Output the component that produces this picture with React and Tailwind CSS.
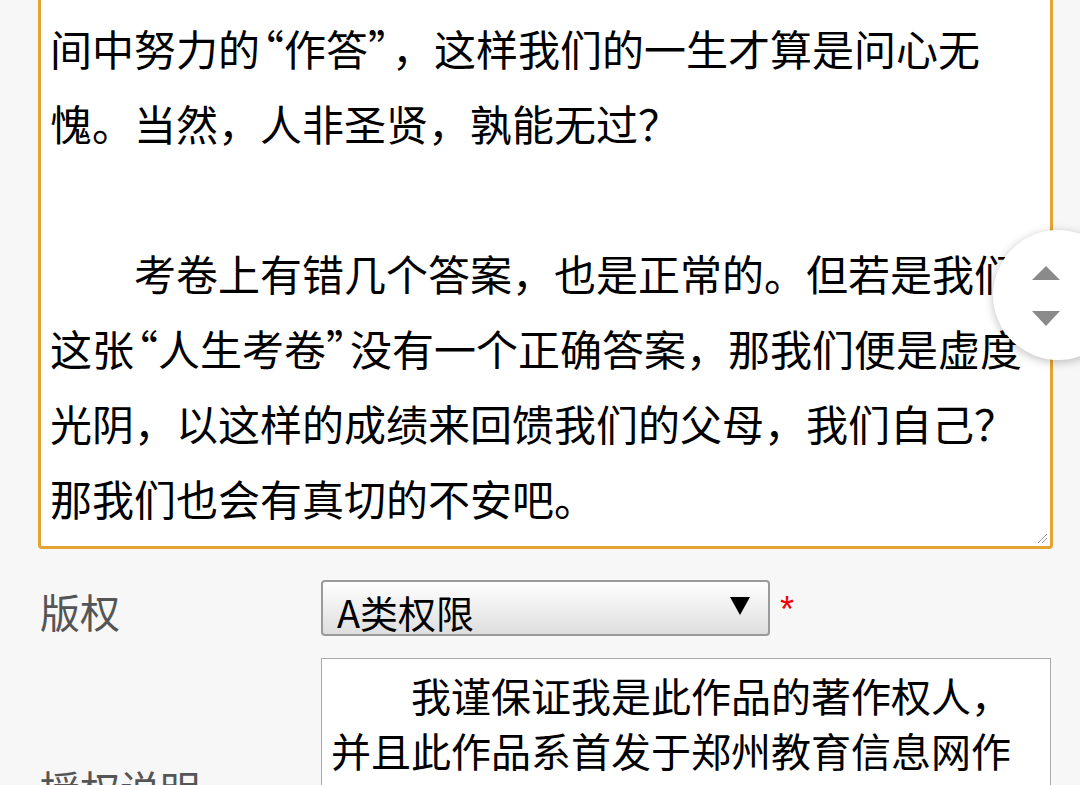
const Q1 = () => <span className="ml-[-18px]">“</span>;
const Q2 = () => <span className="mr-[-18px]">”</span>;

const essay = [
  <>间中努力的<Q1 />作答<Q2 />，这样我们的一生才算是问心无</>,
  "愧。当然，人非圣贤，孰能无过？",
  "",
  "　　考卷上有错几个答案，也是正常的。但若是我们",
  <>这张<Q1 />人生考卷<Q2 />没有一个正确答案，那我们便是虚度</>,
  "光阴，以这样的成绩来回馈我们的父母，我们自己？",
  "那我们也会有真切的不安吧。",
];

const statement = [
  "　　我谨保证我是此作品的著作权人，",
  "并且此作品系首发于郑州教育信息网作",
  "品，未曾在其他地方发表。",
];

const cjk = { fontFamily: '"Noto Sans CJK SC", "Noto Sans", sans-serif' };

function ScrollKnob() {
  return (
    <div className="absolute left-[993px] top-[230px] h-[130px] w-[130px] rounded-full bg-white shadow-[0_2px_10px_rgba(0,0,0,0.25)]">
      <svg width="40" height="70" viewBox="0 0 40 70" className="absolute left-[33px] top-[30px]">
        <polygon points="20,6 34,20 6,20" fill="#8a8a8a" />
        <polygon points="6,51 34,51 20,66" fill="#8a8a8a" />
      </svg>
    </div>
  );
}

export default function App() {
  return (
    <div className="relative h-[785px] w-[1080px] overflow-hidden bg-[#f7f7f7] [text-spacing-trim:space-all]" style={cjk}>
      <div className="relative ml-[38px] mt-[-20px] w-[1015px] rounded-[4px] border-[3px] border-[#e5a432] bg-white pb-[11px] pl-[9px] pr-[4px] pt-[27px]">
        {essay.map((line, i) => (
          <div key={i} className="h-[75px] overflow-hidden whitespace-pre text-[42px] leading-[75px] text-black">
            {line}
          </div>
        ))}
        <svg width="12" height="12" viewBox="0 0 12 12" className="absolute bottom-[2px] right-[2px]">
          <line x1="2" y1="11" x2="11" y2="2" stroke="#999" strokeWidth="1" />
          <line x1="6" y1="11" x2="11" y2="6" stroke="#999" strokeWidth="1" />
        </svg>
      </div>

      <div className="mt-[31px] flex items-center pl-[40px]">
        <div className="h-[56px] w-[281px] text-[40px] leading-[62px] text-[#555]">版权</div>
        <div className="flex h-[56px] w-[449px] items-center justify-between rounded-[4px] border-2 border-[#9a9a9a] bg-gradient-to-b from-white to-[#dedede] pl-[14px] pr-[18px]">
          <span className="pt-[8px] text-[38px] leading-none text-black">A类权限</span>
          <svg width="20" height="18" viewBox="0 0 20 18" className="mb-[4px]">
            <polygon points="0,0 20,0 10,18" fill="#000" />
          </svg>
        </div>
        <span className="ml-[10px] mt-[4px] text-[36px] leading-none text-[#e00]" style={{ fontFamily: '"Liberation Sans", sans-serif' }}>*</span>
      </div>

      <div className="mt-[22px] flex items-start pl-[40px]">
        <div className="w-[281px] pt-[102px] text-[40px] leading-[56px] text-[#555]">授权说明</div>
        <div className="h-[280px] w-[730px] border border-[#aaa] bg-white pl-[9px] pt-[9px]">
          {statement.map((line, i) => (
            <div key={i} className="whitespace-pre text-[40px] leading-[55px] text-black">
              {line}
            </div>
          ))}
        </div>
      </div>

      <ScrollKnob />
    </div>
  );
}
